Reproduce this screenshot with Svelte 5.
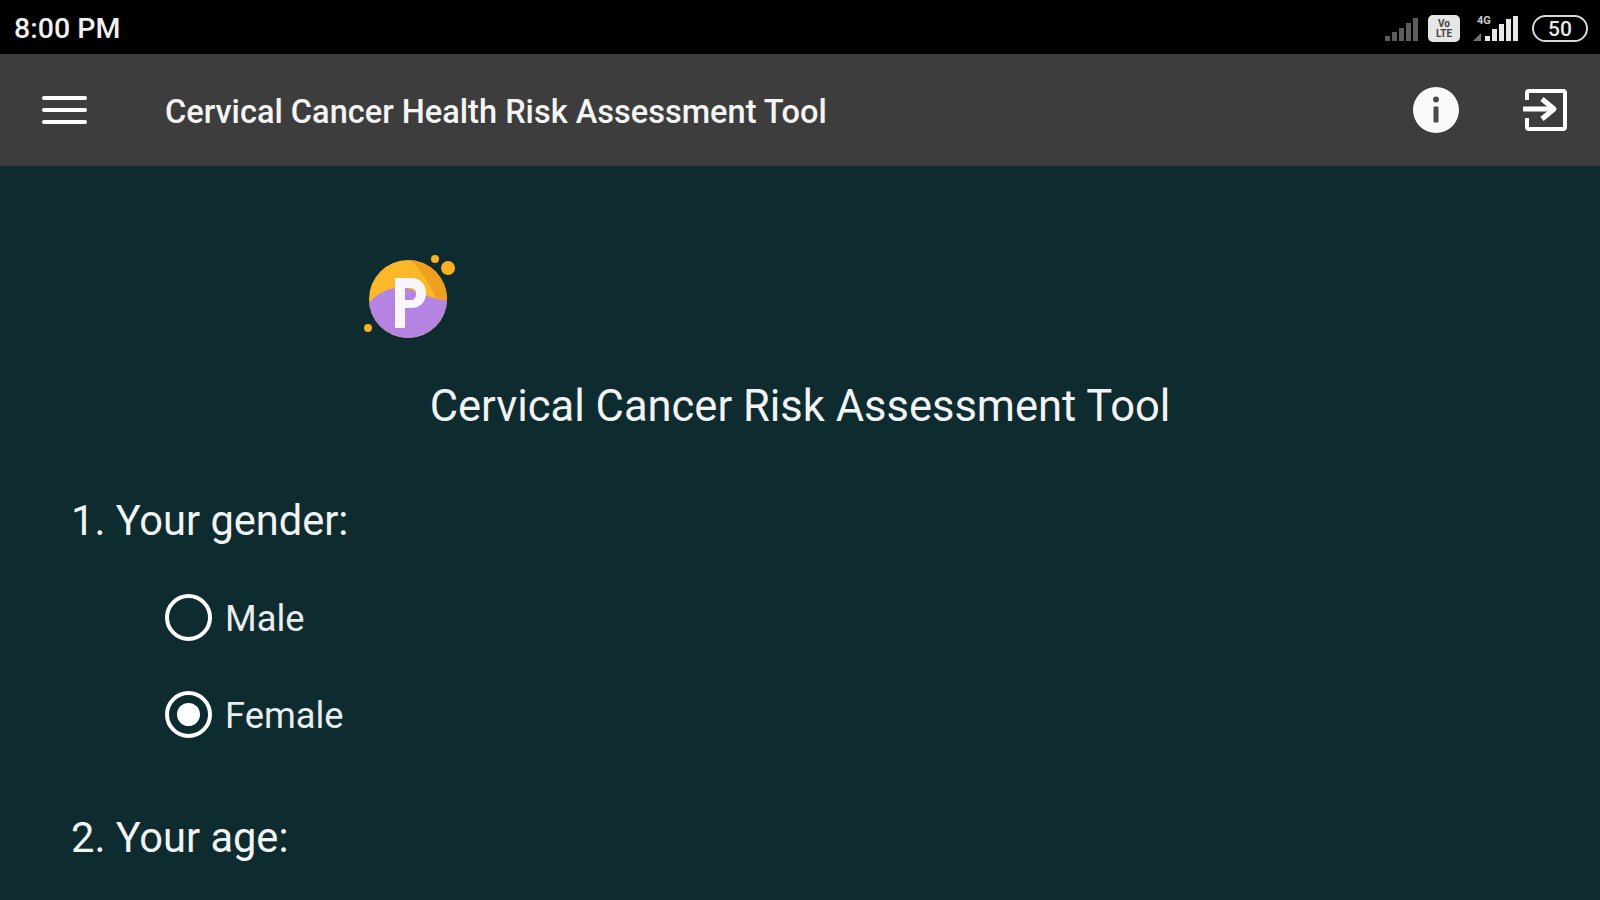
<script>
  let gender = 'female';
</script>

<div class="screen">
  <div class="statusbar">
    <span class="time">8:00 PM</span>
    <div class="status-icons">
      <svg width="36" height="26" viewBox="0 0 36 26" class="dim">
        <rect x="1" y="20" width="5" height="5" />
        <rect x="8" y="16" width="5" height="9" />
        <rect x="15" y="12" width="5" height="13" />
        <rect x="22" y="7" width="5" height="18" />
        <rect x="29" y="2" width="5" height="23" />
      </svg>
      <div class="lte">
        <span>Vo<br />LTE</span>
      </div>
      <svg width="48" height="30" viewBox="0 0 48 30" class="signal">
        <rect x="13" y="22" width="5" height="5" />
        <rect x="20" y="15" width="5" height="12" />
        <rect x="27" y="10" width="5" height="17" />
        <rect x="34" y="5" width="5" height="22" />
        <rect x="41" y="2" width="5" height="25" />
        <path d="M1 27h8v-8z" opacity="0.5" />
        <text x="5" y="10" class="net">4G</text>
      </svg>
      <div class="battery"><span>50</span></div>
    </div>
  </div>

  <header class="appbar">
    <button class="icon-btn menu" aria-label="Menu">
      <svg width="45" height="30" viewBox="0 0 45 30">
        <path d="M2 3h41M2 15h41M2 27h41" stroke="#fff" stroke-width="4" stroke-linecap="round" />
      </svg>
    </button>
    <h1>Cervical Cancer Health Risk Assessment Tool</h1>
    <button class="icon-btn info" aria-label="Info">
      <svg width="48" height="48" viewBox="0 0 48 48">
        <circle cx="24" cy="24" r="23" fill="#fafafa" />
        <rect x="21.5" y="20.5" width="5" height="16" rx="1" fill="#4a4a4a" />
        <circle cx="24" cy="13.5" r="3" fill="#4a4a4a" />
      </svg>
    </button>
    <button class="icon-btn exit" aria-label="Exit">
      <svg width="44" height="44" viewBox="0 0 44 44" fill="none" stroke="#fff" stroke-width="4" stroke-linejoin="round">
        <path d="M4 12V5a2 2 0 0 1 2-2h34a2 2 0 0 1 2 2v34a2 2 0 0 1-2 2H6a2 2 0 0 1-2-2V30" />
        <path d="M1 21h26" stroke-width="5" stroke-linecap="round" />
        <path d="M19 11l12 10-12 10" stroke-width="5" />
      </svg>
    </button>
  </header>

  <main>
    <div class="logo">
      <svg width="94" height="88" viewBox="0 0 94 88">
        <defs>
          <clipPath id="disc"><circle cx="44" cy="45" r="39" /></clipPath>
        </defs>
        <circle cx="44" cy="45" r="39" fill="#fbb829" />
        <g clip-path="url(#disc)">
          <path d="M44 4C58 16 66 32 72 44L92 50V4Z" fill="#f0a020" />
          <path d="M0 54C12 40 24 32 40 34C55 36 68 48 90 46V90H0Z" fill="#b583e2" />
        </g>
        <path d="M31 24h16c9 0 15 6 15 15s-6 15-15 15h-6v20H31ZM41 34v12h6c3 0 5-2 5-6s-2-6-5-6Z" fill="#fbf6fd" fill-rule="evenodd" />
        <circle cx="84" cy="14" r="7" fill="#fbb020" />
        <circle cx="71" cy="5" r="4" fill="#fbb020" />
        <circle cx="4" cy="74" r="4" fill="#fbb020" />
      </svg>
    </div>

    <h2>Cervical Cancer Risk Assessment Tool</h2>

    <section class="question">
      <p class="label">1. Your gender:</p>
      <label class="option">
        <input type="radio" bind:group={gender} value="male" />
        <span class="radio"></span>
        <span class="text">Male</span>
      </label>
      <label class="option">
        <input type="radio" bind:group={gender} value="female" />
        <span class="radio"></span>
        <span class="text">Female</span>
      </label>
    </section>

    <section class="question">
      <p class="label">2. Your age:</p>
    </section>
  </main>
</div>

<style>
  :global(body) {
    margin: 0;
    background: #0e2b2f;
  }

  .screen {
    width: 1600px;
    height: 900px;
    overflow: hidden;
    display: flex;
    flex-direction: column;
    font-family: Roboto, sans-serif;
    color: #f2f4f4;
    background: #0e2b2f;
  }

  .statusbar {
    height: 54px;
    background: #000;
    display: flex;
    align-items: center;
    justify-content: space-between;
    padding: 3px 12px 0 14px;
    box-sizing: border-box;
  }

  .time {
    font-size: 28.5px;
    font-weight: 500;
    color: #f0f0f0;
  }

  .status-icons {
    display: flex;
    align-items: center;
  }

  .dim rect {
    fill: #5c5c5c;
  }

  .lte {
    width: 32px;
    height: 27px;
    margin: 0 12px 0 8px;
    background: #e6e6e6;
    border-radius: 5px;
    display: flex;
    align-items: center;
    justify-content: center;
    overflow: hidden;
  }

  .lte span {
    font-size: 10px;
    font-weight: 700;
    color: #444;
    line-height: 10px;
    text-align: center;
  }

  .signal rect,
  .signal path {
    fill: #e8e8e8;
  }

  .net {
    font-size: 11px;
    font-weight: 700;
    fill: #ccc;
    font-family: Roboto, sans-serif;
  }

  .battery {
    width: 56px;
    height: 27px;
    margin-left: 12px;
    border: 2px solid #d8d8d8;
    border-radius: 14px;
    box-sizing: border-box;
    display: flex;
    align-items: center;
    justify-content: center;
    font-size: 21px;
    font-weight: 500;
    color: #e8e8e8;
  }

  .appbar {
    height: 112px;
    background: #3d3d3d;
    display: flex;
    align-items: center;
    padding-left: 42px;
    padding-right: 33px;
    box-sizing: border-box;
  }

  .appbar h1 {
    margin: 0 0 0 78px;
    padding-top: 4px;
    flex: 1;
    font-size: 32.55px;
    font-weight: 500;
    color: #f5f5f5;
  }

  .icon-btn {
    background: none;
    border: none;
    padding: 0;
    display: flex;
  }

  .exit {
    margin-left: 63px;
  }

  main {
    flex: 1;
    padding: 88px 72px 0;
  }

  .logo {
    margin-left: 292px;
    height: 88px;
  }

  h2 {
    margin: 35px 0 0;
    font-size: 43.5px;
    font-weight: 400;
    text-align: center;
    line-height: 60px;
  }

  .question {
    margin-top: 58px;
  }

  .question + .question {
    margin-top: 49px;
  }

  .label {
    margin: 0 0 0 -1px;
    font-size: 41.6px;
    line-height: 52px;
  }

  .option {
    display: flex;
    align-items: center;
    gap: 14px;
    margin: 0 0 0 93px;
    height: 97px;
    font-size: 36.3px;
    color: #e9eded;
  }

  .text {
    padding-top: 2px;
    margin-left: -1px;
  }

  .label + .option {
    margin-top: 22px;
  }

  .option input {
    position: absolute;
    opacity: 0;
  }

  .radio {
    width: 47px;
    height: 47px;
    border: 4px solid #fff;
    border-radius: 50%;
    box-sizing: border-box;
    display: flex;
    align-items: center;
    justify-content: center;
  }

  .option input:checked + .radio::after {
    content: '';
    width: 23px;
    height: 23px;
    border-radius: 50%;
    background: #fff;
  }
</style>
